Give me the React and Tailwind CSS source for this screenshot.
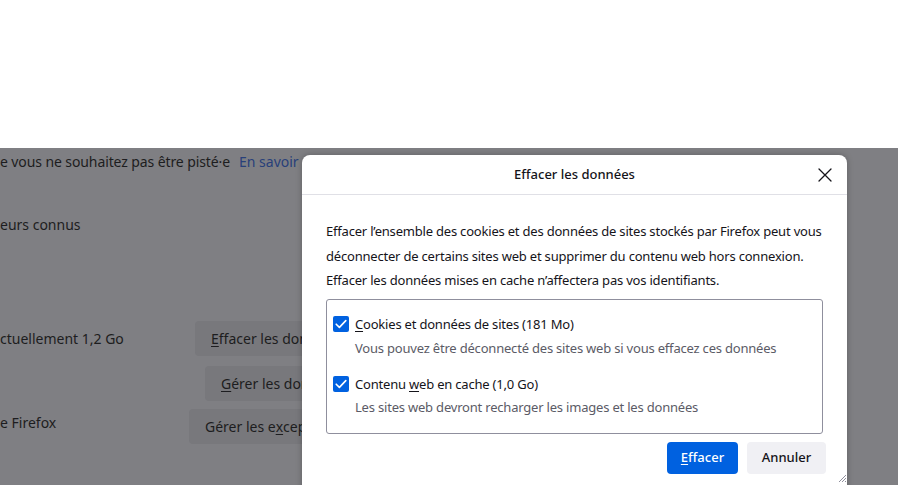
import React from 'react'

const font = { fontFamily: '"Noto Sans", "Open Sans", sans-serif' }

const Check = () => (
  <span className="flex h-4 w-4 shrink-0 items-center justify-center rounded-[2px] bg-[#0061e0]">
    <svg viewBox="0 0 16 16" className="h-4 w-4" fill="none" stroke="white" strokeWidth="1.6" strokeLinecap="round" strokeLinejoin="round">
      <path d="M3.2 8.2 L6.4 11.4 L12.8 4.6" />
    </svg>
  </span>
)

const U = ({ children }) => <span className="underline underline-offset-2">{children}</span>

export default function App() {
  return (
    <div className="relative h-[485px] w-[898px] overflow-hidden bg-white text-[13px] text-[#15141a]" style={font}>
      {/* page top */}
      <div className="h-[148px] bg-white" />

      {/* dimmed preferences page */}
      <div className="h-[337px] bg-[#7f7f83] text-[14px] text-[#1d1d20]">
        <div className="flex h-[26px] items-center whitespace-nowrap">
          <span className="tracking-[-0.1px]">e vous ne souhaitez pas être pisté·e</span>
          <span className="ml-[9px] text-[#28407a]">En savoir plus</span>
        </div>
        <div className="mt-[39px] h-[24px] leading-[24px]">eurs connus</div>

        <div className="mt-[84px] flex h-[35px] items-center whitespace-nowrap">
          <span className="w-[195px]">ctuellement 1,2 Go</span>
          <span className="flex h-[35px] items-center rounded-[4px] bg-[#78787c] px-[16px]">
            <U>E</U>ffacer les données…
          </span>
        </div>
        <div className="mt-[10px] flex h-[35px] items-center whitespace-nowrap">
          <span className="w-[205px]" />
          <span className="flex h-[35px] items-center rounded-[4px] bg-[#78787c] px-[16px]">
            <U>G</U>érer les données…
          </span>
        </div>
        <div className="mt-[8px] flex h-[35px] items-center whitespace-nowrap">
          <span className="w-[189px] pb-[8px]">e Firefox</span>
          <span className="flex h-[35px] items-center rounded-[4px] bg-[#78787c] px-[16px]">
            Gérer les e<U>x</U>ceptions…
          </span>
        </div>
      </div>

      {/* dialog */}
      <div className="absolute left-[302px] top-[155px] h-[340px] w-[545px] rounded-t-[8px] bg-white shadow-[0_0_6px_rgba(0,0,0,0.25)]">
        <div className="relative flex h-[40px] items-center justify-center border-b border-[#e0e0e6]">
          <span className="font-medium">Effacer les données</span>
          <svg viewBox="0 0 16 16" className="absolute right-[14px] top-[12px] h-4 w-4" fill="none" stroke="#15141a" strokeWidth="1.3" strokeLinecap="round">
            <path d="M2 2 L14 14 M14 2 L2 14" />
          </svg>
        </div>

        <div className="px-[24px] pt-[24px] tracking-[-0.2px]">
          <p className="whitespace-nowrap leading-[24.5px]">
            Effacer l’ensemble des cookies et des données de sites stockés par Firefox peut vous<br />
            déconnecter de certains sites web et supprimer du contenu web hors connexion.<br />
            Effacer les données mises en cache n’affectera pas vos identifiants.
          </p>

          <div className="mt-[6px] h-[135px] rounded-[3px] border border-[#8f8f9d] px-[6px] pt-[16px]">
            <div className="flex items-start gap-[6px]">
              <Check />
              <div>
                <div className="leading-[16px]"><U>C</U>ookies et données de sites (181 Mo)</div>
                <div className="mt-[8px] leading-[16px] text-[#5b5b66]">Vous pouvez être déconnecté des sites web si vous effacez ces données</div>
              </div>
            </div>
            <div className="mt-[20px] flex items-start gap-[6px]">
              <Check />
              <div>
                <div className="leading-[16px]">Contenu <U>w</U>eb en cache (1,0 Go)</div>
                <div className="mt-[7px] leading-[16px] text-[#5b5b66]">Les sites web devront recharger les images et les données</div>
              </div>
            </div>
          </div>

          <div className="mt-[8px] flex justify-end gap-[9px] tracking-normal">
            <button className="h-[32px] w-[71px] rounded-[4px] bg-[#0061e0] text-white font-medium"><U>E</U>ffacer</button>
            <button className="mr-[-3px] h-[32px] w-[79px] rounded-[4px] bg-[#f0f0f4] font-medium">Annuler</button>
          </div>
        </div>

        <svg viewBox="0 0 10 10" className="absolute left-[535px] top-[318px] h-[10px] w-[10px]" stroke="#8f8f9d" strokeWidth="1">
          <path d="M9 2 L2 9 M9 5 L5 9 M9 8 L8 9" />
        </svg>
      </div>
    </div>
  )
}
